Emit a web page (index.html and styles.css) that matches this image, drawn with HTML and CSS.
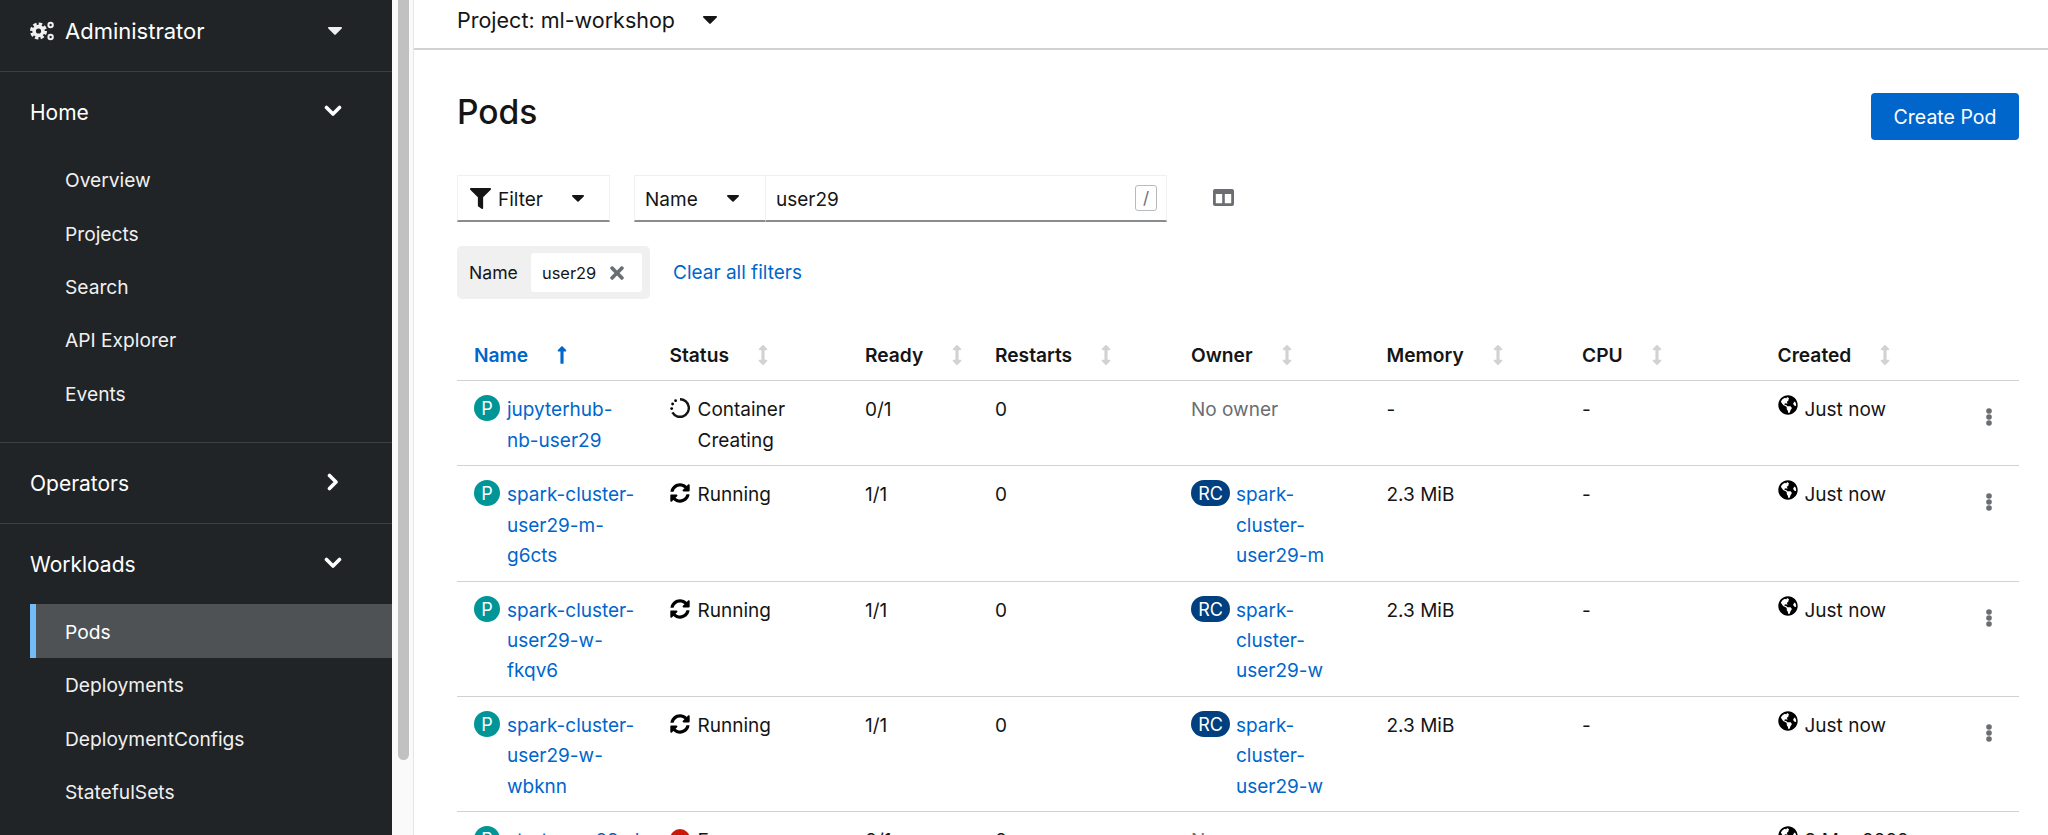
FILE: index.html

```html
<!DOCTYPE html>
<html lang="en">
<head>
    <meta charset="UTF-8">
    <meta name="viewport" content="width=device-width, initial-scale=1.0">
    <title>Pods - ml-workshop</title>
    <link rel="stylesheet" href="styles.css">
</head>
<body>
    <svg class="icon-defs" aria-hidden="true">
        <symbol id="i-caret" viewBox="0 0 14 8"><path d="M1 0h12c.9 0 1.3 1 .7 1.6L7.7 7.6c-.4.4-1 .4-1.4 0L.3 1.6C-.3 1 .1 0 1 0z"/></symbol>
        <symbol id="i-filter" viewBox="0 0 512 512"><path d="M487.976 0H24.028C2.71 0-8.047 25.866 7.058 40.971L192 225.941V432c0 7.831 3.821 15.17 10.237 19.662l80 55.98C298.02 518.69 320 507.493 320 487.98V225.941l184.947-184.97C520.021 25.896 509.338 0 487.976 0z"/></symbol>
        <symbol id="i-times" viewBox="0 0 352 512"><path d="M242.72 256l100.07-100.07c12.28-12.28 12.28-32.19 0-44.48l-22.24-22.24c-12.28-12.28-32.19-12.28-44.48 0L176 189.28 75.93 89.21c-12.28-12.28-32.19-12.28-44.48 0L9.21 111.45c-12.28 12.28-12.28 32.19 0 44.48L109.28 256 9.21 356.07c-12.28 12.28-12.28 32.19 0 44.48l22.24 22.24c12.28 12.28 32.2 12.28 44.48 0L176 322.72l100.07 100.07c12.28 12.28 32.2 12.28 44.48 0l22.24-22.24c12.28-12.28 12.28-32.19 0-44.48L242.72 256z"/></symbol>
        <symbol id="i-sort" viewBox="0 0 256 512"><path d="M214.059 377.941H168V134.059h46.059c21.382 0 32.09-25.851 16.971-40.971L144.971 7.029c-9.373-9.373-24.569-9.373-33.941 0L24.971 93.088c-15.119 15.119-4.411 40.971 16.971 40.971H88v243.882H41.941c-21.382 0-32.09 25.851-16.971 40.971l86.059 86.059c9.373 9.373 24.569 9.373 33.941 0l86.059-86.059c15.12-15.119 4.412-40.971-16.97-40.971z"/></symbol>
        <symbol id="i-sort-up" viewBox="0 0 256 512"><path d="M88 166.059V468c0 6.627 5.373 12 12 12h56c6.627 0 12-5.373 12-12V166.059h46.059c21.382 0 32.09-25.851 16.971-40.971l-86.059-86.059c-9.373-9.373-24.569-9.373-33.941 0l-86.059 86.059c-15.119 15.119-4.411 40.971 16.971 40.971H88z"/></symbol>
        <symbol id="i-sync" viewBox="0 0 512 512"><path d="M370.72 133.28C339.458 104.008 298.888 87.962 255.848 88c-77.458.068-144.328 53.178-162.791 126.85-1.344 5.363-6.122 9.15-11.651 9.15H24.103c-7.498 0-13.194-6.807-11.807-14.176C33.933 94.924 134.813 8 256 8c66.448 0 126.791 26.136 171.315 68.685L463.03 40.97C478.149 25.851 504 36.559 504 57.941V192c0 13.255-10.745 24-24 24H345.941c-21.382 0-32.09-25.851-16.971-40.971l41.75-41.749zM32 296h134.059c21.382 0 32.09 25.851 16.971 40.971l-41.75 41.75c31.262 29.273 71.835 45.319 114.876 45.28 77.418-.07 144.315-53.144 162.787-126.849 1.344-5.363 6.122-9.15 11.651-9.15h57.304c7.498 0 13.194 6.807 11.807 14.176C478.067 417.076 377.187 504 256 504c-66.448 0-126.791-26.136-171.315-68.685L48.97 471.03C33.851 486.149 8 475.441 8 454.059V320c0-13.255 10.745-24 24-24z"/></symbol>
        <symbol id="i-globe" viewBox="0 0 496 512"><path d="M248 8C111.03 8 0 119.03 0 256s111.03 248 248 248 248-111.03 248-248S384.97 8 248 8zm82.29 357.6c-3.9 3.88-7.99 7.95-11.31 11.28-2.99 3-5.1 6.7-6.17 10.71-1.51 5.66-2.73 11.38-4.77 16.87l-17.39 46.85c-13.76 3-28 4.69-42.65 4.69v-27.38c1.69-12.62-7.64-36.26-22.63-51.25-6-6-9.37-14.14-9.37-22.63v-32.01c0-11.64-6.27-22.34-16.46-27.97-14.37-7.95-34.81-19.06-48.81-26.11-11.48-5.78-22.1-13.14-31.65-21.75l-.8-.72a114.792 114.792 0 0 1-18.06-20.74c-9.38-13.77-24.66-36.42-34.59-51.14 20.47-45.5 57.36-82.04 103.2-101.89l24.01 12.01C203.48 89.74 216 82.01 216 70.11v-11.3c7.99-1.29 16.12-2.11 24.45-2.42l28.3 28.3c6.25 6.25 6.25 16.38 0 22.63L264 112l-10.34 10.34c-3.12 3.12-3.12 8.19 0 11.31l4.69 4.69c3.12 3.12 3.12 8.19 0 11.31l-8 8a8.008 8.008 0 0 1-5.66 2.34h-8.99c-2.08 0-4.08.81-5.58 2.27l-9.92 9.65a8.008 8.008 0 0 0-1.58 9.31l15.59 31.19c2.66 5.32-1.21 11.58-7.15 11.58h-5.64c-1.93 0-3.79-.7-5.24-1.96l-9.28-8.06a16.017 16.017 0 0 0-15.55-3.1l-31.17 10.39a11.95 11.95 0 0 0-8.17 11.34c0 4.53 2.56 8.66 6.61 10.69l11.08 5.54c9.41 4.71 19.79 7.16 30.31 7.16s22.59 27.29 32 32h66.75c8.49 0 16.62 3.37 22.63 9.37l13.69 13.69a30.503 30.503 0 0 1 8.93 21.57 46.536 46.536 0 0 1-13.72 32.98zM417 274.25c-5.79-1.45-10.84-5-14.15-9.97l-17.98-26.97a23.97 23.97 0 0 1 0-26.62l19.59-29.38c2.32-3.47 5.5-6.29 9.24-8.15l12.98-6.49C445.55 202.77 456 228.16 456 256c0 8.16-.72 16.15-2.05 23.91L417 274.25z"/></symbol>
        <symbol id="i-kebab" viewBox="0 0 6 18"><circle cx="3" cy="3" r="2.8"/><circle cx="3" cy="9" r="2.8"/><circle cx="3" cy="15" r="2.8"/></symbol>
    </svg>

    <aside class="sidebar">
        <div class="perspective">
            <svg class="gears" viewBox="0 0 24 20" aria-hidden="true">
                <circle class="gear-teeth" cx="8.5" cy="10" r="7"/>
                <circle class="gear-body" cx="8.5" cy="10" r="4.4"/>
                <circle class="gear-small" cx="20.6" cy="4" r="2.2"/>
                <circle class="gear-small" cx="20.6" cy="16" r="2.2"/>
            </svg>
            <span class="perspective-name">Administrator</span>
            <svg class="caret caret-light"><use href="#i-caret"/></svg>
        </div>

        <section class="nav-section nav-home">
            <div class="nav-head">Home
                <svg class="chevron" viewBox="0 0 18 12"><path d="M2.5 2.5L9 9l6.5-6.5"/></svg>
            </div>
            <a class="nav-item">Overview</a>
            <a class="nav-item">Projects</a>
            <a class="nav-item">Search</a>
            <a class="nav-item">API Explorer</a>
            <a class="nav-item">Events</a>
        </section>

        <section class="nav-section">
            <div class="nav-head">Operators
                <svg class="chevron chevron-right" viewBox="0 0 12 18"><path d="M2.5 2.5L9 9l-6.5 6.5"/></svg>
            </div>
        </section>

        <section class="nav-section nav-last">
            <div class="nav-head">Workloads
                <svg class="chevron" viewBox="0 0 18 12"><path d="M2.5 2.5L9 9l6.5-6.5"/></svg>
            </div>
            <a class="nav-item nav-item-active">Pods</a>
            <a class="nav-item">Deployments</a>
            <a class="nav-item">DeploymentConfigs</a>
            <a class="nav-item">StatefulSets</a>
        </section>
    </aside>

    <div class="scroll-track"><div class="scroll-thumb"></div></div>

    <main class="content">
        <div class="project-bar">
            <span>Project: ml-workshop</span>
            <svg class="caret caret-project"><use href="#i-caret"/></svg>
        </div>

        <div class="page-head">
            <h1>Pods</h1>
            <button class="btn-primary">Create Pod</button>
        </div>

        <div class="toolbar">
            <div class="select select-filter">
                <svg class="filter-icon"><use href="#i-filter"/></svg>
                <span>Filter</span>
                <svg class="caret caret-small"><use href="#i-caret"/></svg>
            </div>
            <div class="select select-name">
                <span>Name</span>
                <svg class="caret caret-small"><use href="#i-caret"/></svg>
            </div>
            <div class="search-box">
                <span>user29</span>
                <kbd>/</kbd>
            </div>
            <svg class="columns-icon" viewBox="0 0 21 17" aria-hidden="true">
                <path d="M2 0h17a2 2 0 0 1 2 2v13a2 2 0 0 1-2 2H2a2 2 0 0 1-2-2V2a2 2 0 0 1 2-2zm.8 5v9.2h6.4V5zm9 0v9.2h6.4V5z" fill-rule="evenodd"/>
            </svg>
        </div>

        <div class="chips-row">
            <div class="chip-group">
                <span class="chip-label">Name</span>
                <span class="chip">user29
                    <svg class="chip-close"><use href="#i-times"/></svg>
                </span>
            </div>
            <a class="link clear-link">Clear all filters</a>
        </div>

        <table class="pods-table">
            <colgroup>
                <col class="col-name"><col class="col-status"><col class="col-ready"><col class="col-restarts">
                <col class="col-owner"><col class="col-memory"><col class="col-cpu"><col class="col-created"><col class="col-kebab">
            </colgroup>
            <thead>
                <tr>
                    <th class="sorted">Name<svg class="sort"><use href="#i-sort-up"/></svg></th>
                    <th>Status<svg class="sort"><use href="#i-sort"/></svg></th>
                    <th>Ready<svg class="sort"><use href="#i-sort"/></svg></th>
                    <th>Restarts<svg class="sort"><use href="#i-sort"/></svg></th>
                    <th>Owner<svg class="sort"><use href="#i-sort"/></svg></th>
                    <th>Memory<svg class="sort"><use href="#i-sort"/></svg></th>
                    <th>CPU<svg class="sort"><use href="#i-sort"/></svg></th>
                    <th>Created<svg class="sort"><use href="#i-sort"/></svg></th>
                    <th></th>
                </tr>
            </thead>
            <tbody>
                <tr>
                    <td><div class="res"><span class="badge badge-pod">P</span><a class="link">jupyterhub-<br>nb-user29</a></div></td>
                    <td><div class="res"><svg class="status-icon" viewBox="0 0 20 20" aria-hidden="true"><path class="spin" d="M10 1.2a8.8 8.8 0 1 1-7.6 13.2"/><circle cx="1.7" cy="10.6" r="1.4"/><circle cx="2.6" cy="6" r="1.4"/><circle cx="5.6" cy="2.7" r="1.4"/></svg><span>Container<br>Creating</span></div></td>
                    <td>0/1</td>
                    <td>0</td>
                    <td class="muted">No owner</td>
                    <td>-</td>
                    <td>-</td>
                    <td><div class="res"><svg class="globe"><use href="#i-globe"/></svg><span>Just now</span></div></td>
                    <td class="kebab-cell"><svg class="kebab"><use href="#i-kebab"/></svg></td>
                </tr>
                <tr>
                    <td><div class="res"><span class="badge badge-pod">P</span><a class="link">spark-cluster-<br>user29-m-<br>g6cts</a></div></td>
                    <td><div class="res"><svg class="status-icon"><use href="#i-sync"/></svg><span>Running</span></div></td>
                    <td>1/1</td>
                    <td>0</td>
                    <td><div class="res"><span class="badge badge-rc">RC</span><a class="link">spark-<br>cluster-<br>user29-m</a></div></td>
                    <td>2.3 MiB</td>
                    <td>-</td>
                    <td><div class="res"><svg class="globe"><use href="#i-globe"/></svg><span>Just now</span></div></td>
                    <td class="kebab-cell"><svg class="kebab"><use href="#i-kebab"/></svg></td>
                </tr>
                <tr>
                    <td><div class="res"><span class="badge badge-pod">P</span><a class="link">spark-cluster-<br>user29-w-<br>fkqv6</a></div></td>
                    <td><div class="res"><svg class="status-icon"><use href="#i-sync"/></svg><span>Running</span></div></td>
                    <td>1/1</td>
                    <td>0</td>
                    <td><div class="res"><span class="badge badge-rc">RC</span><a class="link">spark-<br>cluster-<br>user29-w</a></div></td>
                    <td>2.3 MiB</td>
                    <td>-</td>
                    <td><div class="res"><svg class="globe"><use href="#i-globe"/></svg><span>Just now</span></div></td>
                    <td class="kebab-cell"><svg class="kebab"><use href="#i-kebab"/></svg></td>
                </tr>
                <tr>
                    <td><div class="res"><span class="badge badge-pod">P</span><a class="link">spark-cluster-<br>user29-w-<br>wbknn</a></div></td>
                    <td><div class="res"><svg class="status-icon"><use href="#i-sync"/></svg><span>Running</span></div></td>
                    <td>1/1</td>
                    <td>0</td>
                    <td><div class="res"><span class="badge badge-rc">RC</span><a class="link">spark-<br>cluster-<br>user29-w</a></div></td>
                    <td>2.3 MiB</td>
                    <td>-</td>
                    <td><div class="res"><svg class="globe"><use href="#i-globe"/></svg><span>Just now</span></div></td>
                    <td class="kebab-cell"><svg class="kebab"><use href="#i-kebab"/></svg></td>
                </tr>
                <tr>
                    <td><div class="res"><span class="badge badge-pod">P</span><a class="link">start-user29-d</a></div></td>
                    <td><div class="res"><svg class="status-icon status-error" viewBox="0 0 20 20" aria-hidden="true"><circle cx="10" cy="10" r="10"/></svg><span>Error</span></div></td>
                    <td>0/1</td>
                    <td>0</td>
                    <td class="muted">No owner</td>
                    <td>-</td>
                    <td>-</td>
                    <td><div class="res"><svg class="globe"><use href="#i-globe"/></svg><span>9 Mar 2022</span></div></td>
                    <td class="kebab-cell"><svg class="kebab"><use href="#i-kebab"/></svg></td>
                </tr>
            </tbody>
        </table>
    </main>
</body>
</html>
```

FILE: styles.css

```css
body {
    font-family: 'Inter', 'Liberation Sans', sans-serif;
    font-size: 19px;
    line-height: 30.33px;
    margin: 0;
    padding: 0;
    background-color: #fff;
    color: #151515;
    display: flex;
    height: 835px;
    overflow: hidden;
}
.icon-defs {
    display: none;
}
svg {
    display: block;
    flex: none;
}

/* sidebar */
.sidebar {
    width: 392px;
    flex: none;
    background: #212427;
    color: #f0f0f0;
    overflow: hidden;
}
.perspective {
    height: 72px;
    padding: 0 0 9px 30px;
    box-sizing: border-box;
    display: flex;
    align-items: center;
    border-bottom: 1px solid #3c3f42;
    color: #fff;
    font-size: 22px;
}
.gears {
    width: 24px;
    height: 20px;
    margin-right: 11px;
}
.gear-teeth {
    fill: none;
    stroke: #f0f0f0;
    stroke-width: 3;
    stroke-dasharray: 3.4 2.1;
}
.gear-body {
    fill: none;
    stroke: #f0f0f0;
    stroke-width: 3.6;
}
.gear-small {
    fill: none;
    stroke: #f0f0f0;
    stroke-width: 2;
}
.perspective-name {
    flex: 1;
}
.caret {
    fill: #151515;
}
.caret-light {
    width: 14px;
    height: 8px;
    fill: #f0f0f0;
    margin-right: 50px;
}
.nav-section {
    border-bottom: 1px solid #3c3f42;
}
.nav-home {
    padding-bottom: 23px;
}
.nav-last {
    border-bottom: 0;
}
.nav-head {
    height: 80px;
    box-sizing: border-box;
    padding: 2px 50px 0 30px;
    display: flex;
    align-items: center;
    justify-content: space-between;
    font-size: 21px;
    color: #fff;
}
.nav-home .nav-head {
    height: 81px;
}
.chevron {
    width: 18px;
    height: 12px;
    fill: none;
    stroke: #fff;
    stroke-width: 3.6;
    stroke-linecap: round;
    stroke-linejoin: round;
    margin-top: -5px;
}
.chevron-right {
    width: 12px;
    height: 18px;
    margin-right: 3px;
}
.nav-item {
    display: flex;
    align-items: center;
    height: 53.3px;
    box-sizing: border-box;
    padding: 2px 0 0 65px;
    font-size: 19.2px;
    color: #f0f0f0;
}
.nav-item-active {
    margin-left: 30px;
    padding-left: 29px;
    border-left: 6px solid #73bcf7;
    background: #4f5255;
    color: #fff;
}

/* browser scrollbar between nav and page */
.scroll-track {
    width: 22px;
    flex: none;
    box-sizing: border-box;
    background: #fafafa;
    border-right: 1px solid #e6e6e6;
    padding: 0 4px 0 6px;
}
.scroll-thumb {
    height: 760px;
    background: #c1c1c1;
    border-radius: 0 0 6px 6px;
}

/* page */
.content {
    flex: 1;
    min-width: 0;
}
.project-bar {
    height: 50px;
    padding: 0 0 8px 43px;
    box-sizing: border-box;
    display: flex;
    align-items: center;
    border-bottom: 2px solid #d2d2d2;
    font-size: 21.5px;
}
.caret-project {
    width: 14px;
    height: 8px;
    margin-left: 28px;
}
.page-head {
    display: flex;
    justify-content: space-between;
    align-items: center;
    height: 47px;
    margin: 43px 29px 0 43px;
}
h1 {
    margin: 0;
    padding-bottom: 10px;
    font-size: 33.6px;
    font-weight: 500;
    line-height: 47px;
}
.btn-primary {
    font: inherit;
    font-size: 19.5px;
    width: 148px;
    height: 47px;
    padding-top: 3px;
    background-color: #06c;
    color: white;
    border: none;
    border-radius: 4px;
}

/* filter toolbar */
.toolbar {
    display: flex;
    align-items: center;
    margin: 35px 0 0 43px;
}
.select, .search-box {
    height: 47px;
    box-sizing: border-box;
    display: flex;
    align-items: center;
    border: 1px solid #f0f0f0;
    border-bottom: 2px solid #8a8d90;
}
.select span, .search-box span {
    padding-top: 4px;
}
.select-filter {
    width: 153px;
    padding-left: 12px;
}
.filter-icon {
    width: 21px;
    height: 21px;
    margin-right: 7px;
    fill: #151515;
}
.caret-small {
    width: 12px;
    height: 7px;
}
.select-filter .caret-small {
    margin-left: 29px;
}
.select-name {
    width: 131px;
    margin-left: 24px;
    padding-left: 10px;
    border-right: 0;
}
.select-name .caret-small {
    margin-left: 29px;
}
.search-box {
    width: 402px;
    padding: 0 9px 0 10px;
    justify-content: space-between;
}
kbd {
    font: inherit;
    font-size: 17px;
    width: 22px;
    height: 26px;
    line-height: 24px;
    box-sizing: border-box;
    text-align: center;
    border: 1px solid #b8bbbe;
    border-radius: 3px;
    color: #6a6e73;
}
.columns-icon {
    width: 21px;
    height: 17px;
    margin-left: 46px;
    margin-top: -2px;
    fill: #6a6e73;
}
.chips-row {
    display: flex;
    align-items: center;
    margin: 24px 0 0 43px;
}
.chip-group {
    display: flex;
    align-items: center;
    width: 193px;
    height: 53px;
    box-sizing: border-box;
    padding: 0 8px 0 12px;
    background: #f0f0f0;
    border-radius: 5px;
}
.chip-label {
    font-size: 17.6px;
    padding-top: 2px;
    flex: 1;
}
.chip {
    display: flex;
    align-items: center;
    width: 111px;
    height: 39px;
    box-sizing: border-box;
    padding: 2px 0 0 11px;
    background: white;
    border-radius: 3px;
    font-size: 16.4px;
}
.chip-close {
    width: 14px;
    height: 20px;
    margin: -2px 0 0 14px;
    fill: #6a6e73;
}
.link {
    color: #06c;
}
.clear-link {
    margin-left: 23px;
    padding-top: 2px;
}

/* table */
.pods-table {
    width: 1562px;
    margin: 28px 0 0 43px;
    table-layout: fixed;
    border-collapse: collapse;
}
.col-name, .col-status, .col-owner, .col-memory, .col-cpu, .col-created {
    width: 195.5px;
}
.col-ready {
    width: 130px;
}
.col-restarts {
    width: 196px;
}
.col-kebab {
    width: 63px;
}
th {
    padding: 13px 0 10px 17px;
    font-size: 19.2px;
    font-weight: 600;
    text-align: left;
    border-bottom: 1px solid #d2d2d2;
}
th .sort {
    display: inline-block;
    width: 10px;
    height: 20px;
    margin-left: 29px;
    vertical-align: -3px;
    fill: #d2d2d2;
}
.sorted {
    color: #06c;
}
th.sorted .sort {
    fill: #06c;
}
td {
    padding: 14px 0 9.3px 17px;
    vertical-align: top;
    border-bottom: 1px solid #d2d2d2;
}
.muted {
    color: #6a6e73;
}
.res {
    display: flex;
    align-items: flex-start;
}
.badge {
    flex: none;
    height: 26px;
    margin: 0 7px 0 0;
    border-radius: 13px;
    color: white;
    font-size: 18px;
    line-height: 27px;
    text-align: center;
}
.badge-pod {
    width: 26px;
    background: #009596;
}
.badge-rc {
    width: 39px;
    margin-right: 6px;
    background: #004080;
}
.status-icon {
    width: 20px;
    height: 20px;
    margin: 3px 8px 0 0;
}
.spin {
    fill: none;
    stroke: #151515;
    stroke-width: 2.4;
}
.status-error {
    fill: #c9190b;
}
.globe {
    width: 20px;
    height: 20px;
    margin: 0 7px 0 0;
}
.kebab-cell {
    padding: 0;
}
.kebab {
    width: 6px;
    height: 18px;
    margin: 27px 0 0 30px;
    fill: #6a6e73;
}
```
